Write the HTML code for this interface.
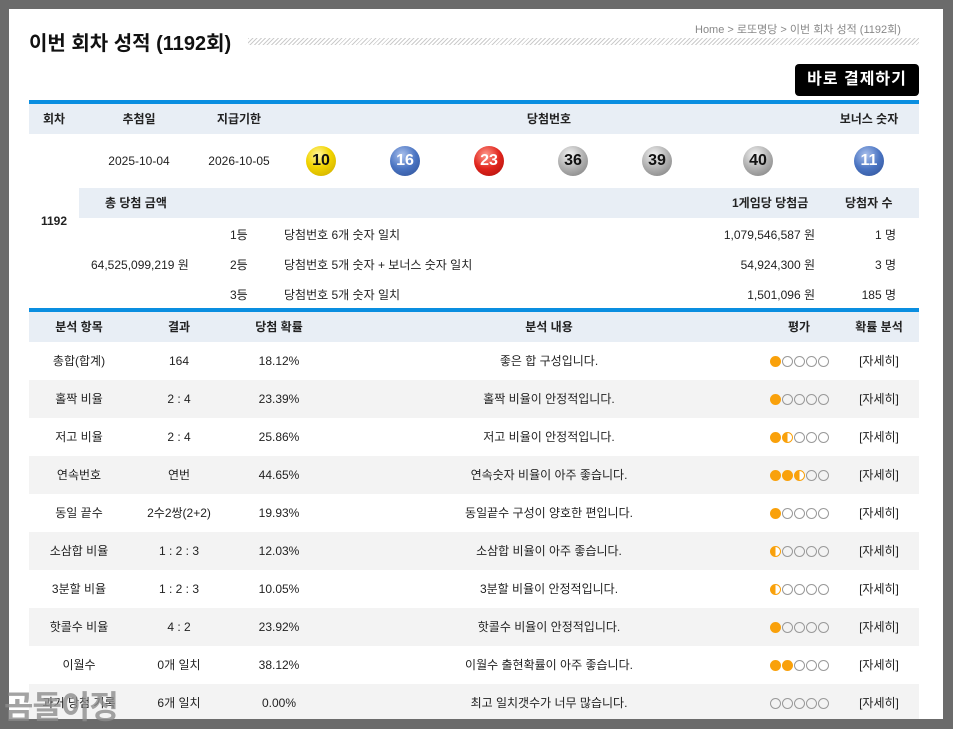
<!DOCTYPE html>
<html><head><meta charset="utf-8"><style>
*{margin:0;padding:0;box-sizing:border-box}
body{width:953px;height:729px;background:#6b6b6b;font-family:"Liberation Sans","Noto Sans CJK KR",sans-serif;font-size:12px;color:#222;position:relative;overflow:hidden}
.panel{position:absolute;left:9px;top:9px;width:934px;height:710px;background:#fff}
.a{position:absolute;white-space:nowrap}
.c{position:absolute;text-align:center;white-space:nowrap}
.row{position:absolute;left:29px;width:890px}
.hd{background:#e8eef5;font-weight:bold}
.ball{position:absolute;width:30px;height:30px;border-radius:50%;color:#111;font-weight:bold;font-size:16px;line-height:30px;text-align:center;font-family:"Liberation Sans",sans-serif;letter-spacing:0}
.y{background:radial-gradient(circle at 40% 30%,#fff6a0,#f2d400 45%,#c9a800)}
.b{background:radial-gradient(circle at 40% 30%,#a9c0ec,#4a74c2 50%,#2d4f95);color:#fff}
.r{background:radial-gradient(circle at 40% 30%,#ff9a8c,#e0241c 50%,#a90e0a);color:#fff}
.g{background:radial-gradient(circle at 40% 30%,#f4f4f4,#b0b0b0 50%,#7a7a7a)}
.rt span{display:inline-block;width:11px;height:11px;border-radius:50%;border:1px solid #999;margin-right:1px;vertical-align:middle}
.rt .f{background:#f9a10b;border-color:#f9a10b}
.rt .h{background:linear-gradient(90deg,#f9a10b 50%,#fff 50%);border-color:#f9a10b}
</style></head><body>
<div class="panel"></div>
<div class="a" style="left:29px;top:27px;font-size:20px;font-weight:bold;color:#111">이번 회차 성적 (1192회)</div>
<div class="a" style="left:248px;top:38px;width:671px;height:7px;background:repeating-linear-gradient(135deg,#ccc 0 1px,#fff 1px 3px)"></div>
<div class="a" style="left:695px;top:21px;font-size:11px;color:#888;background:#fff">Home &gt; 로또명당 &gt; 이번 회차 성적 (1192회)</div>
<div class="a" style="left:795px;top:64px;width:124px;height:32px;background:#000;border-radius:4px;color:#fff;font-weight:bold;font-size:16px;line-height:32px;text-align:center;letter-spacing:1px">바로 결제하기</div>

<div class="row" style="top:100px;height:4px;background:#0a8ee0"></div>
<div class="row hd" style="top:104px;height:30px;line-height:30px">
<div class="c" style="left:0;width:50px">회차</div>
<div class="c" style="left:70px;width:80px">추첨일</div>
<div class="c" style="left:170px;width:80px">지급기한</div>
<div class="c" style="left:480px;width:80px">당첨번호</div>
<div class="c" style="left:800px;width:80px">보너스 숫자</div>
</div>
<div class="c" style="left:29px;top:214px;width:50px;font-weight:bold">1192</div>
<div class="c" style="left:99px;top:154px;width:80px">2025-10-04</div>
<div class="c" style="left:199px;top:154px;width:80px">2026-10-05</div>
<div class="ball y" style="left:306px;top:146px">10</div>
<div class="ball b" style="left:390px;top:146px">16</div>
<div class="ball r" style="left:474px;top:146px">23</div>
<div class="ball g" style="left:558px;top:146px">36</div>
<div class="ball g" style="left:642px;top:146px">39</div>
<div class="ball g" style="left:743px;top:146px">40</div>
<div class="ball b" style="left:854px;top:146px">11</div>

<div class="a hd" style="left:79px;top:188px;width:840px;height:30px;line-height:30px">
<div class="a" style="left:26px">총 당첨 금액</div>
<div class="a" style="left:653px">1게임당 당첨금</div>
<div class="a" style="left:766px">당첨자 수</div>
</div>
<div class="a" style="left:91px;top:256px">64,525,099,219 원</div>
<div class="a" style="left:230px;top:226px">1등</div><div class="a" style="left:284px;top:226px">당첨번호 6개 숫자 일치</div>
<div class="a" style="left:230px;top:256px">2등</div><div class="a" style="left:284px;top:256px">당첨번호 5개 숫자 + 보너스 숫자 일치</div>
<div class="a" style="left:230px;top:286px">3등</div><div class="a" style="left:284px;top:286px">당첨번호 5개 숫자 일치</div>
<div class="a" style="right:138px;top:226px">1,079,546,587 원</div>
<div class="a" style="right:138px;top:256px">54,924,300 원</div>
<div class="a" style="right:138px;top:286px">1,501,096 원</div>
<div class="a" style="right:57px;top:226px">1 명</div>
<div class="a" style="right:57px;top:256px">3 명</div>
<div class="a" style="right:57px;top:286px">185 명</div>

<div class="row" style="top:308px;height:4px;background:#0a8ee0"></div>
<div class="row hd" style="top:312px;height:30px;line-height:30px">
<div class="c" style="left:0;width:100px">분석 항목</div>
<div class="c" style="left:100px;width:100px">결과</div>
<div class="c" style="left:200px;width:100px">당첨 확률</div>
<div class="c" style="left:300px;width:440px">분석 내용</div>
<div class="c" style="left:740px;width:60px">평가</div>
<div class="c" style="left:810px;width:80px">확률 분석</div>
</div>

<div class="row" style="top:342px;height:38px;line-height:38px"><div class="c" style="left:0;width:100px">총합(합계)</div><div class="c" style="left:100px;width:100px">164</div><div class="c" style="left:200px;width:100px">18.12%</div><div class="c" style="left:300px;width:440px">좋은 합 구성입니다.</div><div class="a rt" style="left:741px"><span class="f"></span><span></span><span></span><span></span><span></span></div><div class="c" style="left:810px;width:80px">[자세히]</div></div>
<div class="row" style="top:380px;height:38px;line-height:38px;background:#f3f3f3"><div class="c" style="left:0;width:100px">홀짝 비율</div><div class="c" style="left:100px;width:100px">2 : 4</div><div class="c" style="left:200px;width:100px">23.39%</div><div class="c" style="left:300px;width:440px">홀짝 비율이 안정적입니다.</div><div class="a rt" style="left:741px"><span class="f"></span><span></span><span></span><span></span><span></span></div><div class="c" style="left:810px;width:80px">[자세히]</div></div>
<div class="row" style="top:418px;height:38px;line-height:38px"><div class="c" style="left:0;width:100px">저고 비율</div><div class="c" style="left:100px;width:100px">2 : 4</div><div class="c" style="left:200px;width:100px">25.86%</div><div class="c" style="left:300px;width:440px">저고 비율이 안정적입니다.</div><div class="a rt" style="left:741px"><span class="f"></span><span class="h"></span><span></span><span></span><span></span></div><div class="c" style="left:810px;width:80px">[자세히]</div></div>
<div class="row" style="top:456px;height:38px;line-height:38px;background:#f3f3f3"><div class="c" style="left:0;width:100px">연속번호</div><div class="c" style="left:100px;width:100px">연번</div><div class="c" style="left:200px;width:100px">44.65%</div><div class="c" style="left:300px;width:440px">연속숫자 비율이 아주 좋습니다.</div><div class="a rt" style="left:741px"><span class="f"></span><span class="f"></span><span class="h"></span><span></span><span></span></div><div class="c" style="left:810px;width:80px">[자세히]</div></div>
<div class="row" style="top:494px;height:38px;line-height:38px"><div class="c" style="left:0;width:100px">동일 끝수</div><div class="c" style="left:100px;width:100px">2수2쌍(2+2)</div><div class="c" style="left:200px;width:100px">19.93%</div><div class="c" style="left:300px;width:440px">동일끝수 구성이 양호한 편입니다.</div><div class="a rt" style="left:741px"><span class="f"></span><span></span><span></span><span></span><span></span></div><div class="c" style="left:810px;width:80px">[자세히]</div></div>
<div class="row" style="top:532px;height:38px;line-height:38px;background:#f3f3f3"><div class="c" style="left:0;width:100px">소삼합 비율</div><div class="c" style="left:100px;width:100px">1 : 2 : 3</div><div class="c" style="left:200px;width:100px">12.03%</div><div class="c" style="left:300px;width:440px">소삼합 비율이 아주 좋습니다.</div><div class="a rt" style="left:741px"><span class="h"></span><span></span><span></span><span></span><span></span></div><div class="c" style="left:810px;width:80px">[자세히]</div></div>
<div class="row" style="top:570px;height:38px;line-height:38px"><div class="c" style="left:0;width:100px">3분할 비율</div><div class="c" style="left:100px;width:100px">1 : 2 : 3</div><div class="c" style="left:200px;width:100px">10.05%</div><div class="c" style="left:300px;width:440px">3분할 비율이 안정적입니다.</div><div class="a rt" style="left:741px"><span class="h"></span><span></span><span></span><span></span><span></span></div><div class="c" style="left:810px;width:80px">[자세히]</div></div>
<div class="row" style="top:608px;height:38px;line-height:38px;background:#f3f3f3"><div class="c" style="left:0;width:100px">핫콜수 비율</div><div class="c" style="left:100px;width:100px">4 : 2</div><div class="c" style="left:200px;width:100px">23.92%</div><div class="c" style="left:300px;width:440px">핫콜수 비율이 안정적입니다.</div><div class="a rt" style="left:741px"><span class="f"></span><span></span><span></span><span></span><span></span></div><div class="c" style="left:810px;width:80px">[자세히]</div></div>
<div class="row" style="top:646px;height:38px;line-height:38px"><div class="c" style="left:0;width:100px">이월수</div><div class="c" style="left:100px;width:100px">0개 일치</div><div class="c" style="left:200px;width:100px">38.12%</div><div class="c" style="left:300px;width:440px">이월수 출현확률이 아주 좋습니다.</div><div class="a rt" style="left:741px"><span class="f"></span><span class="f"></span><span></span><span></span><span></span></div><div class="c" style="left:810px;width:80px">[자세히]</div></div>
<div class="row" style="top:684px;height:35px;line-height:38px;background:#f3f3f3;overflow:hidden"><div class="c" style="left:0;width:100px">과거 당첨 기록</div><div class="c" style="left:100px;width:100px">6개 일치</div><div class="c" style="left:200px;width:100px">0.00%</div><div class="c" style="left:300px;width:440px">최고 일치갯수가 너무 많습니다.</div><div class="a rt" style="left:741px"><span></span><span></span><span></span><span></span><span></span></div><div class="c" style="left:810px;width:80px">[자세히]</div></div>
<div class="a" style="left:4px;top:682px;font-size:32px;font-weight:bold;color:rgba(140,140,140,0.8);letter-spacing:-1px">곰돌이정</div>
</body></html>
